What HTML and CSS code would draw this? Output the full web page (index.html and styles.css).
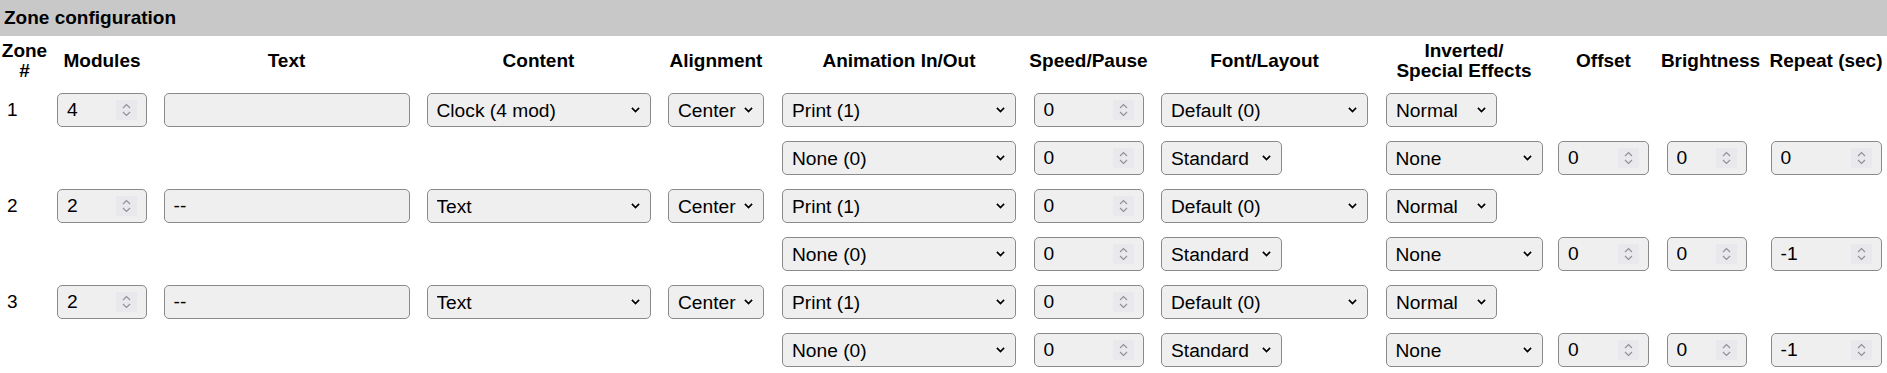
FILE: index.html
```html
<!DOCTYPE html>
<html lang="en">
<head>
  <meta charset="UTF-8">
  <title>Zone configuration</title>
  <link rel="stylesheet" href="styles.css">
</head>
<body>
  <div class="panel">
    <div class="panel-title">Zone configuration</div>

    <div class="zones">
      <!-- Header row -->
      <div class="th">Zone<br>#</div>
      <div class="th">Modules</div>
      <div class="th">Text</div>
      <div class="th">Content</div>
      <div class="th">Alignment</div>
      <div class="th">Animation In/Out</div>
      <div class="th">Speed/Pause</div>
      <div class="th">Font/Layout</div>
      <div class="th">Inverted/<br>Special Effects</div>
      <div class="th">Offset</div>
      <div class="th">Brightness</div>
      <div class="th">Repeat (sec)</div>

      <!-- Zone 1 -->
      <div class="zone-no">1</div>
      <div class="field num w-mod"><input type="text" value="4"><span class="spin"></span></div>
      <input class="field w-text" type="text" value="">
      <select class="field w-content"><option>Clock (4 mod)</option></select>
      <select class="field w-align"><option>Center</option></select>
      <select class="field w-anim"><option>Print (1)</option></select>
      <div class="field num w-speed"><input type="text" value="0"><span class="spin"></span></div>
      <select class="field w-font"><option>Default (0)</option></select>
      <select class="field w-normal narrow"><option>Normal</option></select>

      <select class="field w-anim out"><option>None (0)</option></select>
      <div class="field num w-speed"><input type="text" value="0"><span class="spin"></span></div>
      <select class="field w-std narrow"><option>Standard</option></select>
      <select class="field w-fx"><option>None</option></select>
      <div class="field num w-offset"><input type="text" value="0"><span class="spin"></span></div>
      <div class="field num w-bright"><input type="text" value="0"><span class="spin"></span></div>
      <div class="field num w-repeat"><input type="text" value="0"><span class="spin"></span></div>

      <!-- Zone 2 -->
      <div class="zone-no">2</div>
      <div class="field num w-mod"><input type="text" value="2"><span class="spin"></span></div>
      <input class="field w-text" type="text" value="--">
      <select class="field w-content"><option>Text</option></select>
      <select class="field w-align"><option>Center</option></select>
      <select class="field w-anim"><option>Print (1)</option></select>
      <div class="field num w-speed"><input type="text" value="0"><span class="spin"></span></div>
      <select class="field w-font"><option>Default (0)</option></select>
      <select class="field w-normal narrow"><option>Normal</option></select>

      <select class="field w-anim out"><option>None (0)</option></select>
      <div class="field num w-speed"><input type="text" value="0"><span class="spin"></span></div>
      <select class="field w-std narrow"><option>Standard</option></select>
      <select class="field w-fx"><option>None</option></select>
      <div class="field num w-offset"><input type="text" value="0"><span class="spin"></span></div>
      <div class="field num w-bright"><input type="text" value="0"><span class="spin"></span></div>
      <div class="field num w-repeat"><input type="text" value="-1"><span class="spin"></span></div>

      <!-- Zone 3 -->
      <div class="zone-no">3</div>
      <div class="field num w-mod"><input type="text" value="2"><span class="spin"></span></div>
      <input class="field w-text" type="text" value="--">
      <select class="field w-content"><option>Text</option></select>
      <select class="field w-align"><option>Center</option></select>
      <select class="field w-anim"><option>Print (1)</option></select>
      <div class="field num w-speed"><input type="text" value="0"><span class="spin"></span></div>
      <select class="field w-font"><option>Default (0)</option></select>
      <select class="field w-normal narrow"><option>Normal</option></select>

      <select class="field w-anim out"><option>None (0)</option></select>
      <div class="field num w-speed"><input type="text" value="0"><span class="spin"></span></div>
      <select class="field w-std narrow"><option>Standard</option></select>
      <select class="field w-fx"><option>None</option></select>
      <div class="field num w-offset"><input type="text" value="0"><span class="spin"></span></div>
      <div class="field num w-bright"><input type="text" value="0"><span class="spin"></span></div>
      <div class="field num w-repeat"><input type="text" value="-1"><span class="spin"></span></div>
    </div>
  </div>
</body>
</html>
```

FILE: styles.css
```css
/* Basic Reset */
* {
  margin: 0;
  padding: 0;
  box-sizing: border-box;
}

body {
  background-color: #ffffff;
  color: #000000;
  font-family: "Liberation Sans", Arial, sans-serif;
}

/* Title bar */
.panel-title {
  background-color: #c8c8c8;
  height: 36px;
  line-height: 36px;
  padding-left: 4px;
  font-size: 19px;
  font-weight: bold;
}

/* Zone grid */
.zones {
  display: grid;
  grid-template-columns: 49px 106px 263px 241px 114px 252px 127px 225px 174px 105px 109px 122px;
  grid-template-rows: 50px repeat(6, 48px);
  align-items: center;
  justify-items: center;
}

.th {
  font-size: 19px;
  font-weight: bold;
  line-height: 20px;
  text-align: center;
  white-space: nowrap;
}

.zone-no {
  justify-self: start;
  padding-left: 7px;
  font-size: 19px;
}

/* Form controls */
.field {
  height: 34px;
  border: 1px solid #8a8a8a;
  border-radius: 5px;
  background-color: #efefef;
  color: #000;
  font-family: inherit;
  font-size: 19.2px;
  padding: 0 9px;
  outline: none;
}

select.field {
  appearance: none;
  -webkit-appearance: none;
  background-image: url("data:image/svg+xml,%3Csvg xmlns='http://www.w3.org/2000/svg' width='9' height='6' viewBox='0 0 9 6'%3E%3Cpath d='M0.9 0.9L4.5 4.5L8.1 0.9' fill='none' stroke='%23000' stroke-width='1.7'/%3E%3C/svg%3E");
  background-repeat: no-repeat;
  background-position: right 10px center;
  background-size: 9px 6px;
}

.num {
  display: flex;
  align-items: center;
}

.num input {
  flex: 1;
  min-width: 0;
  border: none;
  background: transparent;
  font: inherit;
  color: inherit;
  outline: none;
}

.spin {
  width: 21px;
  height: 20px;
  flex-shrink: 0;
  background-color: #e8e8ed;
  background-image: url("data:image/svg+xml,%3Csvg xmlns='http://www.w3.org/2000/svg' width='9' height='14' viewBox='0 0 9 14'%3E%3Cpath d='M1 5L4.5 1.5L8 5M1 9L4.5 12.5L8 9' fill='none' stroke='%23909090' stroke-width='1.1'/%3E%3C/svg%3E");
  background-repeat: no-repeat;
  background-position: center;
}

/* Column widths */
.w-mod { width: 90px; }
.w-text { width: 246px; }
.w-content { width: 224px; }
.w-align { width: 96px; }
.w-anim { width: 234px; }
.w-speed { width: 110px; }
.w-font { width: 207px; }
.w-std { width: 121px; }
.w-normal { width: 111px; }
.w-fx { width: 157px; }
.w-offset { width: 91px; }
.w-bright { width: 80px; margin-right: 8px; }
.w-repeat { width: 111px; }

/* second line of a zone starts under Animation In/Out */
.out {
  grid-column: 6;
}

/* narrower selects sit at the left of their column */
.narrow {
  justify-self: start;
  margin-left: 9px;
}
```
